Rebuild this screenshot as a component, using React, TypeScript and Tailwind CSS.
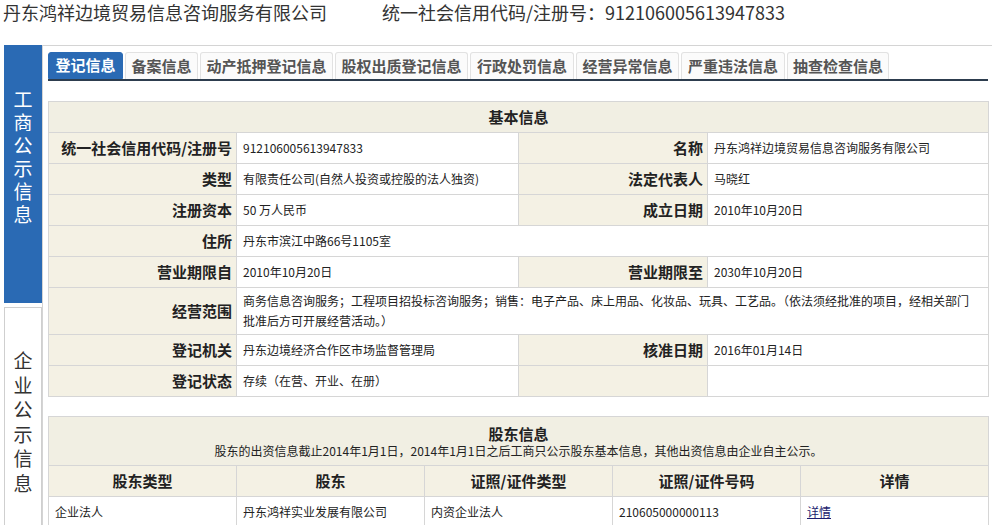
import React from "react";

const tabs: [string, string][] = [
  ["登记信息", "w-[75px]"],
  ["备案信息", "w-[73px]"],
  ["动产抵押登记信息", "w-[133px]"],
  ["股权出质登记信息", "w-[133px]"],
  ["行政处罚信息", "w-[104px]"],
  ["经营异常信息", "w-[103px]"],
  ["严重违法信息", "w-[104px]"],
  ["抽查检查信息", "w-[102px]"],
];

const label =
  "bg-[#f4f1e4] border border-[#d6d6d6] text-right pr-[4px] text-[15px] font-bold text-[#222] whitespace-nowrap";
const value = "bg-white border border-[#d6d6d6] pl-[6px] text-[12px] text-[#222]";

function Row({
  l1,
  v1,
  l2,
  v2,
}: {
  l1: string;
  v1: string;
  l2?: string;
  v2?: string;
}) {
  return (
    <tr className="h-[31px]">
      <td className={label}>{l1}</td>
      <td className={value}>{v1}</td>
      <td className={label}>{l2}</td>
      <td className={value}>{v2}</td>
    </tr>
  );
}

export default function App() {
  return (
    <div
      className="w-[992px] h-[525px] overflow-hidden bg-white text-[#222]"
      style={{ fontFamily: '"Noto Sans CJK SC", "Noto Sans", sans-serif' }}
    >
      {/* top title */}
      <div className="h-[45px] pl-[3px] flex items-start text-[18px] leading-[24px] text-[#333]">
        <span>丹东鸿祥边境贸易信息咨询服务有限公司</span>
        <span className="ml-[55px]">统一社会信用代码/注册号：912106005613947833</span>
      </div>

      <div className="flex">
        {/* side nav */}
        <div className="w-[38px] ml-[4px] flex flex-col gap-[4px] shrink-0">
          <div className="h-[258px] bg-[#2a6ab4] flex flex-col items-center pt-[42px] text-white text-[19px] leading-[23px]">
            {"工商公示信息".split("").map((c) => (
              <span key={c + "a"}>{c}</span>
            ))}
          </div>
          <div className="h-[230px] border border-[#cfcfcf] flex flex-col items-center pt-[40px] text-[#333] text-[19px] leading-[24.5px]">
            {"企业公示信息".split("").map((c) => (
              <span key={c + "b"}>{c}</span>
            ))}
          </div>
        </div>

        {/* main panel */}
        <div className="flex-1 border-t border-l border-[#d4d4d4] pl-[5px] pt-[6px] h-[480px]">
          <div className="w-[940px] flex gap-[2px] border-b-2 border-[#2d3d4e]">
            {tabs.map(([t, w], i) => (
              <div
                key={t}
                className={
                  i === 0
                    ? `${w} h-[27px] flex items-center justify-center rounded-t-[3px] bg-[#2a6ab4] border border-[#2a6ab4] text-white text-[15px] font-bold`
                    : `${w} h-[27px] flex items-center justify-center rounded-t-[3px] bg-[#fbfbfb] border border-b-0 border-[#e2e2e2] text-[#555] text-[15px] font-bold`
                }
              >
                {t}
              </div>
            ))}
          </div>

          {/* basic info */}
          <table className="mt-[20px] w-[940px] border-collapse table-fixed border border-[#cdcdcd]">
            <colgroup>
              <col className="w-[188px]" />
              <col className="w-[282px]" />
              <col className="w-[189px]" />
              <col className="w-[281px]" />
            </colgroup>
            <tbody>
              <tr className="h-[31px]">
                <td
                  colSpan={4}
                  className="bg-[#f1efe3] border border-[#d6d6d6] text-center text-[15px] font-bold"
                >
                  基本信息
                </td>
              </tr>
              <Row
                l1="统一社会信用代码/注册号"
                v1="912106005613947833"
                l2="名称"
                v2="丹东鸿祥边境贸易信息咨询服务有限公司"
              />
              <Row
                l1="类型"
                v1="有限责任公司(自然人投资或控股的法人独资)"
                l2="法定代表人"
                v2="马晓红"
              />
              <Row l1="注册资本" v1="50 万人民币" l2="成立日期" v2="2010年10月20日" />
              <tr className="h-[31px]">
                <td className={label}>住所</td>
                <td colSpan={3} className={value}>
                  丹东市滨江中路66号1105室
                </td>
              </tr>
              <Row l1="营业期限自" v1="2010年10月20日" l2="营业期限至" v2="2030年10月20日" />
              <tr className="h-[47px]">
                <td className={label}>经营范围</td>
                <td colSpan={3} className={value + " leading-[20px] whitespace-nowrap"}>
                  商务信息咨询服务；工程项目招投标咨询服务；销售：电子产品、床上用品、化妆品、玩具、工艺品。（依法须经批准的项目，经相关部门
                  <br />
                  批准后方可开展经营活动。）
                </td>
              </tr>
              <Row l1="登记机关" v1="丹东边境经济合作区市场监督管理局" l2="核准日期" v2="2016年01月14日" />
              <Row l1="登记状态" v1="存续（在营、开业、在册）" l2="" v2="" />
            </tbody>
          </table>

          {/* shareholders */}
          <table className="mt-[19px] w-[940px] border-collapse table-fixed border border-[#cdcdcd]">
            <colgroup>
              <col className="w-[188px]" />
              <col className="w-[188px]" />
              <col className="w-[188px]" />
              <col className="w-[188px]" />
              <col className="w-[188px]" />
            </colgroup>
            <tbody>
              <tr className="h-[49px]">
                <td colSpan={5} className="bg-[#f1efe3] border border-[#d6d6d6] text-center">
                  <div className="text-[15px] font-bold leading-[19px]">股东信息</div>
                  <div className="text-[12px] leading-[16px]">
                    股东的出资信息截止2014年1月1日，2014年1月1日之后工商只公示股东基本信息，其他出资信息由企业自主公示。
                  </div>
                </td>
              </tr>
              <tr className="h-[31px]">
                {["股东类型", "股东", "证照/证件类型", "证照/证件号码", "详情"].map((h) => (
                  <td
                    key={h}
                    className="bg-[#f4f1e4] border border-[#d6d6d6] text-center text-[15px] font-bold"
                  >
                    {h}
                  </td>
                ))}
              </tr>
              <tr className="h-[31px]">
                <td className={value}>企业法人</td>
                <td className={value}>丹东鸿祥实业发展有限公司</td>
                <td className={value}>内资企业法人</td>
                <td className={value}>210605000000113</td>
                <td className={value}>
                  <a className="text-[#1c1c6e] underline">详情</a>
                </td>
              </tr>
            </tbody>
          </table>
        </div>
      </div>
    </div>
  );
}
